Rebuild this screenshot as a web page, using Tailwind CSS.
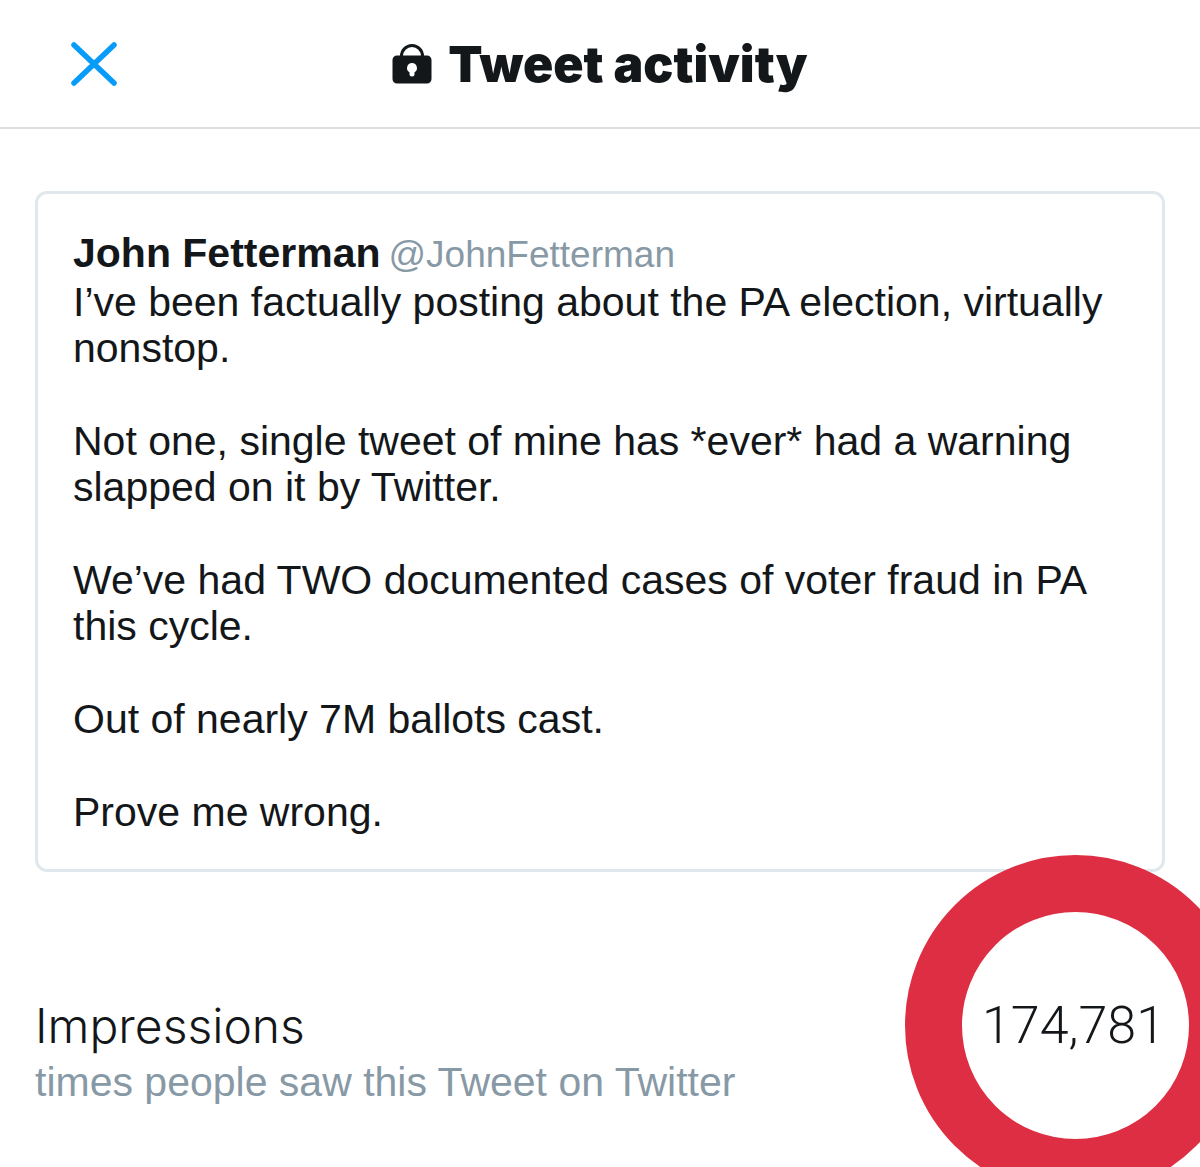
<!DOCTYPE html>
<html lang="en">

<head>
    <meta charset="UTF-8" />
    <meta name="viewport" content="width=device-width, initial-scale=1" />
    <title>Tweet activity</title>
    <script src="https://cdn.jsdelivr.net/npm/@tailwindcss/browser@4"></script>
</head>

<body class="bg-white font-['Liberation_Sans',Arial,sans-serif] text-[#14171a]">
    <div class="min-h-screen overflow-hidden">

        <!-- Header -->
        <header class="grid grid-cols-[1fr_auto_1fr] items-center h-[129px] px-[70px] border-b-2 border-[#dcdce1]">
            <button type="button" aria-label="Close" class="justify-self-start">
                <svg class="w-12 h-12" viewBox="0 0 48 48" fill="none" stroke="#089cfa" stroke-width="5.500" stroke-linecap="round">
                    <path d="M4 5l40 38M44 5L4 43" />
                </svg>
            </button>
            <h1 class="flex items-center gap-4 font-['Inter',sans-serif] text-[50px] leading-[50px] font-black">
                <svg class="w-10 h-10" viewBox="0 0 40 40" fill="none">
                    <path d="M9.500 13V12a10.500 10.500 0 0 1 21 0v1" stroke="#14171a" stroke-width="3" />
                    <path fill="#14171a" fill-rule="evenodd" d="M5 11.500h30a4.500 4.500 0 0 1 4.500 4.500v19a4.500 4.500 0 0 1-4.500 4.500H5A4.500 4.500 0 0 1 .5 35V16A4.500 4.500 0 0 1 5 11.500zM20 19a5 5 0 0 0-2.500 9.300V30a2.500 2.500 0 0 0 5 0v-1.700A5 5 0 0 0 20 19z" />
                </svg>
                Tweet activity
            </h1>
        </header>

        <main class="px-[35px] pt-[62px]">
            <!-- Tweet -->
            <article class="border-3 border-[#e1e8ed] rounded-xl px-[35px] pt-9 pb-[34px] text-[41px] leading-[46px]">
                <div class="flex items-baseline gap-2 mb-px">
                    <h2 class="font-bold">John Fetterman</h2>
                    <a href="#" class="text-[37px] text-[#8899a6]">@JohnFetterman</a>
                </div>
                <div class="flex flex-col gap-[47px]">
                    <p>I’ve been factually posting about the PA election, virtually nonstop.</p>
                    <p>Not one, single tweet of mine has *ever* had a warning slapped on it by Twitter.</p>
                    <p>We’ve had TWO documented cases of voter fraud in PA this cycle.</p>
                    <p>Out of nearly 7M ballots cast.</p>
                    <p>Prove me wrong.</p>
                </div>
            </article>

            <!-- Impressions -->
            <dl class="flex justify-between mt-[124px]">
                <dt>
                    <span class="block font-['Inter',sans-serif] font-light text-5xl leading-[60px]">Impressions</span>
                    <span class="block text-[41px] leading-[52px] text-[#8899a6]">times people saw this Tweet on Twitter</span>
                </dt>
                <dd class="relative font-['Roboto',sans-serif] font-light text-[52px] leading-[60px]">
                    <span class="absolute -right-[81px] -top-[141px] w-[341px] h-[341px] rounded-full border-57 border-[#de2e43] bg-white"></span>
                    <span class="relative">174,781</span>
                </dd>
            </dl>
        </main>
    </div>
</body>

</html>
